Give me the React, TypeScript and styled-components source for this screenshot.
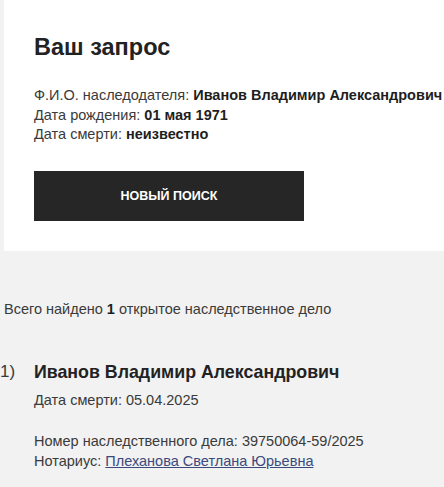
import * as React from 'react';
import styled, {createGlobalStyle} from 'styled-components';

const GlobalStyle = createGlobalStyle`
  html, body {
    margin: 0;
    padding: 0;
    background: #f2f2f2;
  }
  body {
    font-family: "Liberation Sans", Arial, sans-serif;
    color: #2b2b2b;
  }
`

const Page = styled.div`
  width: 444px;
  overflow: hidden;
`

const RequestCard = styled.section`
  background: #fff;
  margin-left: 4px;
  width: 480px;
  padding: 33px 30px 30px 30px;
  box-sizing: border-box;
`

const Title = styled.h2`
  margin: 0 0 25px;
  font-size: 23.5px;
  line-height: 28px;
  font-weight: 700;
  color: #222;
`

const Line = styled.div`
  font-size: 14.5px;
  line-height: 19.5px;
  white-space: nowrap;
  color: #3a3a3a;
  > b {
    font-weight: 700;
    color: #1e1e1e;
  }
`

const SearchButton = styled.button`
  display: flex;
  align-items: center;
  justify-content: center;
  margin-top: 26px;
  width: 270px;
  height: 50px;
  border: 0;
  background: #262626;
  color: #fff;
  font-family: "Liberation Sans", Arial, sans-serif;
  font-size: 12.5px;
  font-weight: 700;
  cursor: pointer;
`

const Results = styled.section`
  padding: 48px 0 0 4px;
`

const Summary = styled.div`
  font-size: 14.5px;
  line-height: 20px;
  color: #3a3a3a;
  > b { color: #1e1e1e; }
`

const Case = styled.div`
  display: grid;
  grid-template-columns: 34px 1fr;
  margin-top: 41px;
  margin-left: -4px;
`

const CaseIndex = styled.div`
  font-size: 17px;
  line-height: 24px;
  color: #3a3a3a;
`

const CaseBody = styled.div`
  display: flex;
  flex-direction: column;
`

const CaseName = styled.div`
  font-size: 17.8px;
  line-height: 24px;
  font-weight: 700;
  color: #222;
  margin-bottom: 7px;
`

const Group = styled.div<{$gap?: number}>`
  margin-top: ${p => p.$gap ?? 0}px;
`

const Link = styled.a`
  color: #3a4a7c;
  text-decoration: underline;
`

function App() {
  return (
    <Page>
      <GlobalStyle/>
      <RequestCard>
        <Title>Ваш запрос</Title>
        <Line>Ф.И.О. наследодателя: <b>Иванов Владимир Александрович</b></Line>
        <Line>Дата рождения: <b>01 мая 1971</b></Line>
        <Line>Дата смерти: <b>неизвестно</b></Line>
        <SearchButton>НОВЫЙ ПОИСК</SearchButton>
      </RequestCard>
      <Results>
        <Summary>Всего найдено <b>1</b> открытое наследственное дело</Summary>
        <Case>
          <CaseIndex>1)</CaseIndex>
          <CaseBody>
            <CaseName>Иванов Владимир Александрович</CaseName>
            <Line>Дата смерти: 05.04.2025</Line>
            <Group $gap={22}>
              <Line>Номер наследственного дела: 39750064-59/2025</Line>
              <Line>Нотариус: <Link href="#">Плеханова Светлана Юрьевна</Link></Line>
            </Group>
          </CaseBody>
        </Case>
      </Results>
    </Page>
  );
}

export default App
